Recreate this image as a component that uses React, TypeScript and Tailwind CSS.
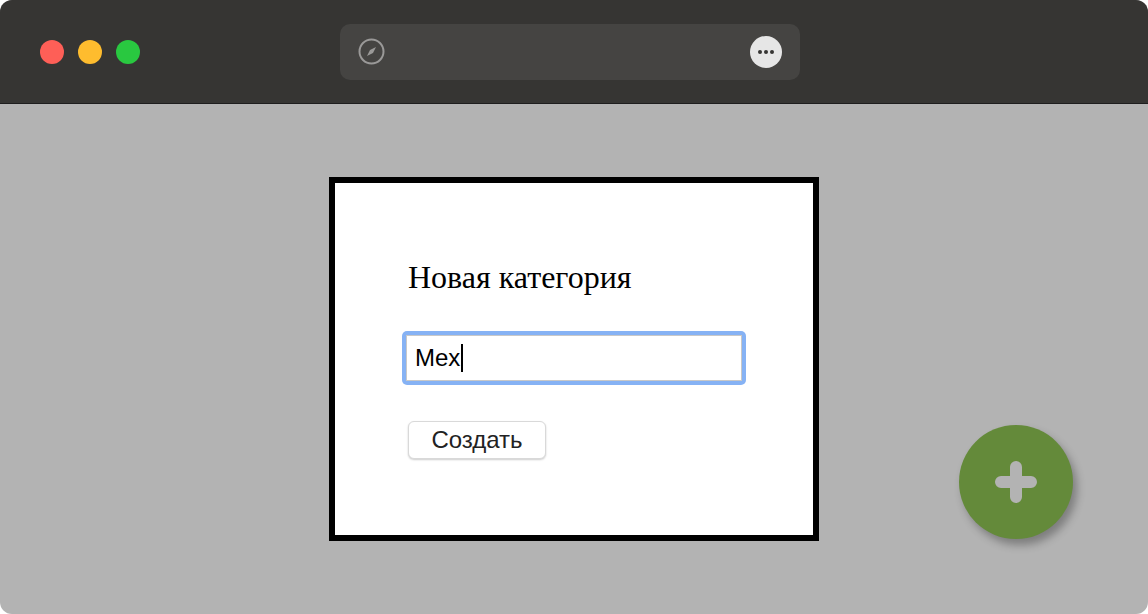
export default function App() {
  return (
    <div className="w-[1148px] h-[614px] bg-white">
      <div className="w-full h-full rounded-[12px] overflow-hidden flex flex-col bg-[#b3b3b3]">
        <div className="h-[104px] bg-[#363533] border-b border-[#1e1e1e] flex items-center relative shrink-0">
          <div className="flex gap-[14px] pl-[40px]">
            <div className="w-[24px] h-[24px] rounded-full bg-[#fe5f57]" />
            <div className="w-[24px] h-[24px] rounded-full bg-[#febc2e]" />
            <div className="w-[24px] h-[24px] rounded-full bg-[#29c840]" />
          </div>
          <div className="ml-[200px] w-[460px] h-[56px] rounded-[10px] bg-[#454442] flex items-center justify-between px-[18px]">
            <svg width="27" height="27" viewBox="0 0 27 27">
              <circle cx="13.5" cy="13.5" r="12" fill="none" stroke="#9a9998" strokeWidth="2" />
              <path d="M18 9 L15 15 L9 18 L12 12 Z" fill="#9a9998" />
            </svg>
            <div className="w-[32px] h-[32px] rounded-full bg-[#e6e6e6] flex items-center justify-center gap-[2px]">
              <span className="w-[4px] h-[4px] rounded-full bg-[#363533]" />
              <span className="w-[4px] h-[4px] rounded-full bg-[#363533]" />
              <span className="w-[4px] h-[4px] rounded-full bg-[#363533]" />
            </div>
          </div>
        </div>
        <div className="flex-1 relative flex items-center justify-center">
          <div className="w-[490px] h-[364px] bg-white border-[6px] border-black pl-[73px] pt-[74px]">
            <h1 className="text-[32px] leading-[40px] text-black" style={{ fontFamily: '"Liberation Serif", serif' }}>Новая категория</h1>
            <div className="mt-[34px] w-[344px] h-[54px] rounded-[5px] bg-[#86b2f4] p-[4px] ml-[-6px]">
              <div className="w-full h-full bg-white border-[1px] border-[#c8c8c8] flex items-center pl-[8px] text-[24px] text-black" style={{ fontFamily: '"Liberation Sans", sans-serif' }}>
                Mex<span className="inline-block w-[2px] h-[28px] bg-black ml-[1px]" />
              </div>
            </div>
            <button className="mt-[36px] w-[138px] h-[38px] bg-white rounded-[6px] border border-[#d9d9d9] shadow-[0_1px_2px_rgba(0,0,0,0.2)] text-[24px] text-[#222] leading-none" style={{ fontFamily: '"Liberation Sans", sans-serif' }}>Создать</button>
          </div>
          <div className="absolute left-[959px] top-[321px] w-[114px] h-[114px] rounded-full bg-[#648a3a] shadow-[4px_6px_8px_rgba(0,0,0,0.3)] flex items-center justify-center">
            <svg width="46" height="46" viewBox="0 0 46 46">
              <path d="M23 8 V38 M8 23 H38" stroke="#b3b3b3" strokeWidth="12" strokeLinecap="round" />
            </svg>
          </div>
        </div>
      </div>
    </div>
  );
}
